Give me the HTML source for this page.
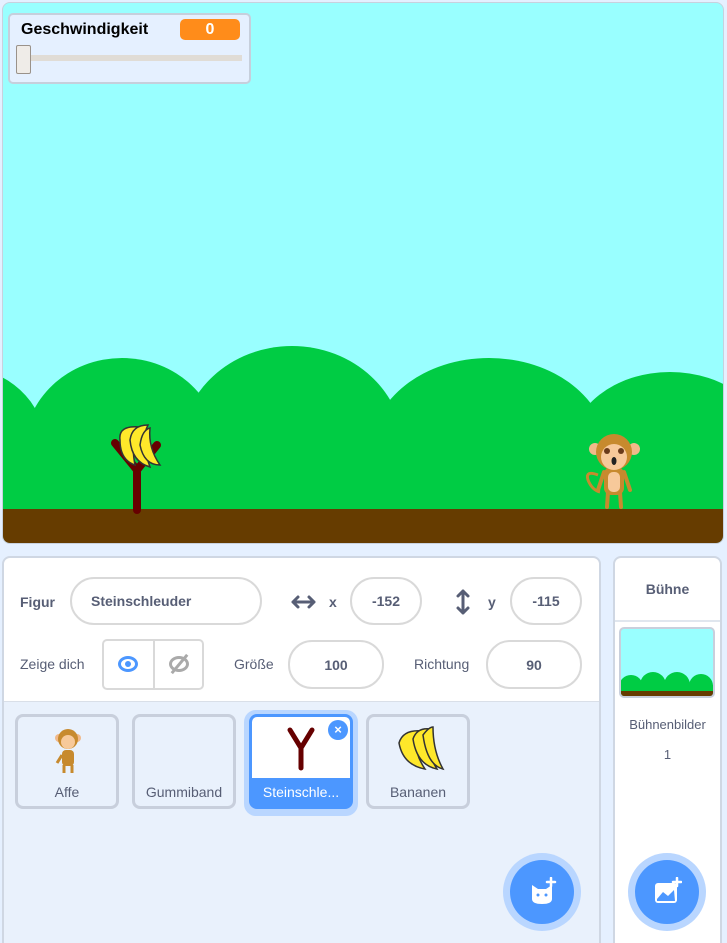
<!DOCTYPE html>
<html><head><meta charset="utf-8"><style>
*{box-sizing:border-box;margin:0;padding:0}
html,body{width:727px;height:943px;overflow:hidden}
body{background:#e5f0ff;font-family:"Liberation Sans",sans-serif;position:relative;color:#575e75}
.abs{position:absolute}
.stage{left:2px;top:2px;width:722px;height:542px;border:1px solid #c8d1de;border-radius:8px;overflow:hidden;background:#99ffff}
.mon{left:8px;top:13px;width:243px;height:71px;background:#e5f0ff;border:2px solid #c6cfdc;border-radius:5px}
.pane{background:#fff;border:2px solid #cfd7e3;border-radius:8px}
.inp{border:2px solid #d9d9d9;border-radius:24px;background:#fff;font-weight:bold;font-size:14px;color:#575e75;display:flex;align-items:center;justify-content:center}
.lbl{font-size:14px}
.tile{width:104px;height:95px;border:3px solid #c8cfdc;border-radius:8px;background:#e9f1fc;font-size:14px;text-align:center}
.tile span{position:absolute;left:0;right:0;bottom:6px}
.btn{width:78px;height:78px;border-radius:50%;background:#b9d6ff;display:flex;align-items:center;justify-content:center}
.btn div{width:64px;height:64px;border-radius:50%;background:#4c97ff;display:flex;align-items:center;justify-content:center}
</style></head><body>
<div class="abs stage">
<svg width="722" height="542" viewBox="3 3 722 542" style="position:absolute;left:0;top:0">
<g fill="#00cc44">
<ellipse cx="-40" cy="445" rx="85" ry="78"/>
<ellipse cx="122" cy="450" rx="98" ry="92"/>
<ellipse cx="292" cy="450" rx="112" ry="104"/>
<ellipse cx="489" cy="450" rx="118" ry="92"/>
<ellipse cx="670" cy="450" rx="100" ry="78"/>
<ellipse cx="790" cy="440" rx="80" ry="70"/>
<rect x="0" y="440" width="730" height="80"/>
</g>
<rect x="0" y="509" width="730" height="40" fill="#663c00"/>
<path d="M137 510 L137 470 M137 470 L115 443 M137 470 L157 445" stroke="#660000" stroke-width="8" stroke-linecap="round" fill="none"/>
<g stroke="#333" stroke-width="1.5" fill="#ffe82a">
<path d="M120 440 Q118 425 140 427 Q130 440 135 465 Q120 460 120 440Z"/>
<path d="M130 440 Q132 425 148 425 Q140 440 150 467 Q132 462 130 440Z"/>
<path d="M140 445 Q142 430 150 428 Q148 448 160 465 Q144 465 140 445Z"/>
</g>
<g>
<path d="M598 475 Q585 470 588 480 Q592 490 600 492" stroke="#c78a2e" stroke-width="3" fill="none"/>
<rect x="604" y="467" width="20" height="28" rx="7" fill="#c78a2e"/>
<rect x="608" y="472" width="12" height="20" rx="5" fill="#f7c99a"/>
<path d="M608 492 L607 507 M620 492 L621 507 M604 472 L598 490 M624 472 L630 490" stroke="#c78a2e" stroke-width="4" stroke-linecap="round"/>
<circle cx="595" cy="449" r="6" fill="#f1b98a"/><circle cx="634" cy="449" r="6" fill="#f1b98a"/>
<circle cx="614" cy="452" r="18" fill="#c78a2e"/>
<ellipse cx="614" cy="457" rx="13" ry="13" fill="#f7c99a"/>
<circle cx="607" cy="451" r="3" fill="#6a3b1a"/><circle cx="621" cy="451" r="3" fill="#6a3b1a"/>
<ellipse cx="614" cy="461" rx="2.5" ry="4" fill="#222"/>
</g>
</svg>
</div>
<div class="abs mon">
<div class="abs" style="left:11px;top:6px;font-size:16px;font-weight:bold;color:#000">Geschwindigkeit</div>
<div class="abs" style="left:170px;top:4px;width:60px;height:21px;background:#ff8c1a;border-radius:5px;color:#fff;font-size:16px;font-weight:bold;text-align:center;line-height:21px">0</div>
<div class="abs" style="left:8px;top:40px;width:224px;height:6px;background:#e0dcd6"></div>
<div class="abs" style="left:6px;top:30px;width:15px;height:29px;background:#efece8;border:1px solid #9a928a;border-radius:2px"></div>
</div>

<div class="abs pane" style="left:2px;top:556px;width:599px;height:420px;overflow:hidden">
<div class="abs" style="left:0;top:143px;width:600px;height:280px;background:#e9f1fc;border-top:1px solid #d9dfe8"></div>
</div>
<div class="abs lbl" style="left:20px;top:594px;font-weight:bold">Figur</div>
<div class="abs inp" style="left:70px;top:577px;width:192px;height:48px;justify-content:flex-start;padding-left:19px">Steinschleuder</div>
<svg class="abs" style="left:290px;top:594px" width="27" height="16"><path d="M3 8H24M3 8L8 3M3 8L8 13M24 8L19 3M24 8L19 13" stroke="#575e75" stroke-width="3" fill="none" stroke-linecap="round" stroke-linejoin="round"/></svg>
<div class="abs lbl" style="left:329px;top:594px;font-weight:bold">x</div>
<div class="abs inp" style="left:350px;top:577px;width:72px;height:48px">-152</div>
<svg class="abs" style="left:455px;top:588px" width="16" height="28"><path d="M8 3V25M8 3L3 8M8 3L13 8M8 25L3 20M8 25L13 20" stroke="#575e75" stroke-width="3" fill="none" stroke-linecap="round" stroke-linejoin="round"/></svg>
<div class="abs lbl" style="left:488px;top:594px;font-weight:bold">y</div>
<div class="abs inp" style="left:510px;top:577px;width:72px;height:48px">-115</div>

<div class="abs lbl" style="left:20px;top:656px">Zeige dich</div>
<div class="abs" style="left:102px;top:639px;width:102px;height:51px;border:2px solid #d9d9d9;border-radius:5px;background:#fff">
<div class="abs" style="left:49px;top:0;width:2px;height:47px;background:#d9d9d9"></div>
<div class="abs" style="left:14px;top:15px;width:20px;height:16px;border-radius:50%;border:3px solid #4c97ff"><div style="width:6px;height:6px;background:#4c97ff;border-radius:50%;margin:2px auto 0"></div></div>
<div class="abs" style="left:65px;top:15px;width:20px;height:16px;border-radius:50%;border:3px solid #aaa"></div>
<div class="abs" style="left:74px;top:11px;width:3px;height:24px;background:#aaa;transform:rotate(40deg)"></div>
</div>
<div class="abs lbl" style="left:234px;top:656px">Größe</div>
<div class="abs inp" style="left:288px;top:640px;width:96px;height:49px">100</div>
<div class="abs lbl" style="left:414px;top:656px">Richtung</div>
<div class="abs inp" style="left:486px;top:640px;width:96px;height:49px">90</div>

<div class="abs tile" style="left:15px;top:714px"><svg class="abs" style="left:33px;top:8px" width="34" height="50"><circle cx="8" cy="13" r="4" fill="#f1b98a"/><circle cx="26" cy="13" r="4" fill="#f1b98a"/><circle cx="17" cy="14" r="10" fill="#c78a2e"/><circle cx="17" cy="17" r="7" fill="#f7c99a"/><rect x="11" y="25" width="12" height="16" rx="4" fill="#c78a2e"/><path d="M13 40V48M21 40V48M11 30L6 38" stroke="#c78a2e" stroke-width="3"/></svg><span>Affe</span></div>
<div class="abs tile" style="left:132px;top:714px"><span>Gummiband</span></div>
<div class="abs" style="left:244px;top:710px;width:114px;height:106px;border-radius:12px;background:#b9d6ff"></div>
<div class="abs tile" style="left:249px;top:714px;border-color:#4c97ff;background:#4c97ff;color:#fff"><div class="abs" style="left:0;top:0;width:98px;height:61px;background:#fff;border-radius:5px 5px 0 0"></div><svg class="abs" style="left:34px;top:9px" width="30" height="46"><path d="M15 42V22L4 4M15 22L26 4" stroke="#660000" stroke-width="5" fill="none" stroke-linecap="round"/></svg><div class="abs" style="left:76px;top:3px;width:20px;height:20px;border-radius:50%;background:#4c97ff;color:#fff;font-size:13px;font-weight:bold;line-height:20px;text-align:center">×</div><span>Steinschle...</span></div>
<div class="abs tile" style="left:366px;top:714px"><svg class="abs" style="left:26px;top:8px" width="50" height="48"><g stroke="#333" stroke-width="1.5" fill="#ffe82a"><path d="M4 18Q8 4 28 6Q14 20 30 44Q8 40 4 18Z"/><path d="M18 14Q22 2 36 4Q28 22 42 44Q22 40 18 14Z"/><path d="M28 10Q34 2 38 2Q38 26 48 44Q32 40 28 10Z"/></g></svg><span>Bananen</span></div>

<div class="abs btn" style="left:503px;top:853px"><div><svg width="30" height="30"><path d="M5 8L11 12H19L25 8V22Q25 27 15 27Q5 27 5 22Z" fill="#fff"/><circle cx="11" cy="18" r="1.5" fill="#4c97ff"/><circle cx="19" cy="18" r="1.5" fill="#4c97ff"/><path d="M24 1V9M20 5H28" stroke="#fff" stroke-width="2.5" stroke-linecap="round"/></svg></div></div>

<div class="abs pane" style="left:613px;top:556px;width:109px;height:420px">
<div class="abs" style="left:0;top:62px;width:105px;height:2px;background:#e0e6ee"></div>
</div>
<div class="abs" style="left:614px;top:581px;width:107px;text-align:center;font-size:14px;font-weight:bold">Bühne</div>
<div class="abs" style="left:619px;top:627px;width:96px;height:71px;border:2px solid #c8cfdc;border-radius:5px;overflow:hidden;background:#99ffff">
<svg width="92" height="67"><g fill="#00cc44"><circle cx="10" cy="58" r="12"/><circle cx="32" cy="56" r="13"/><circle cx="56" cy="56" r="13"/><circle cx="80" cy="57" r="12"/><rect x="0" y="56" width="92" height="6"/></g><rect x="0" y="62" width="92" height="5" fill="#663c00"/></svg>
</div>
<div class="abs" style="left:614px;top:717px;width:107px;text-align:center;font-size:13px">Bühnenbilder</div>
<div class="abs" style="left:614px;top:747px;width:107px;text-align:center;font-size:13px">1</div>
<div class="abs btn" style="left:628px;top:853px"><div><svg width="30" height="30"><rect x="3" y="6" width="22" height="20" rx="3" fill="#fff"/><path d="M5 22L11 15L16 19L22 13L23 24H5Z" fill="#4c97ff"/><path d="M25 1V9M21 5H29" stroke="#fff" stroke-width="2.5" stroke-linecap="round"/></svg></div></div>
</body></html>
